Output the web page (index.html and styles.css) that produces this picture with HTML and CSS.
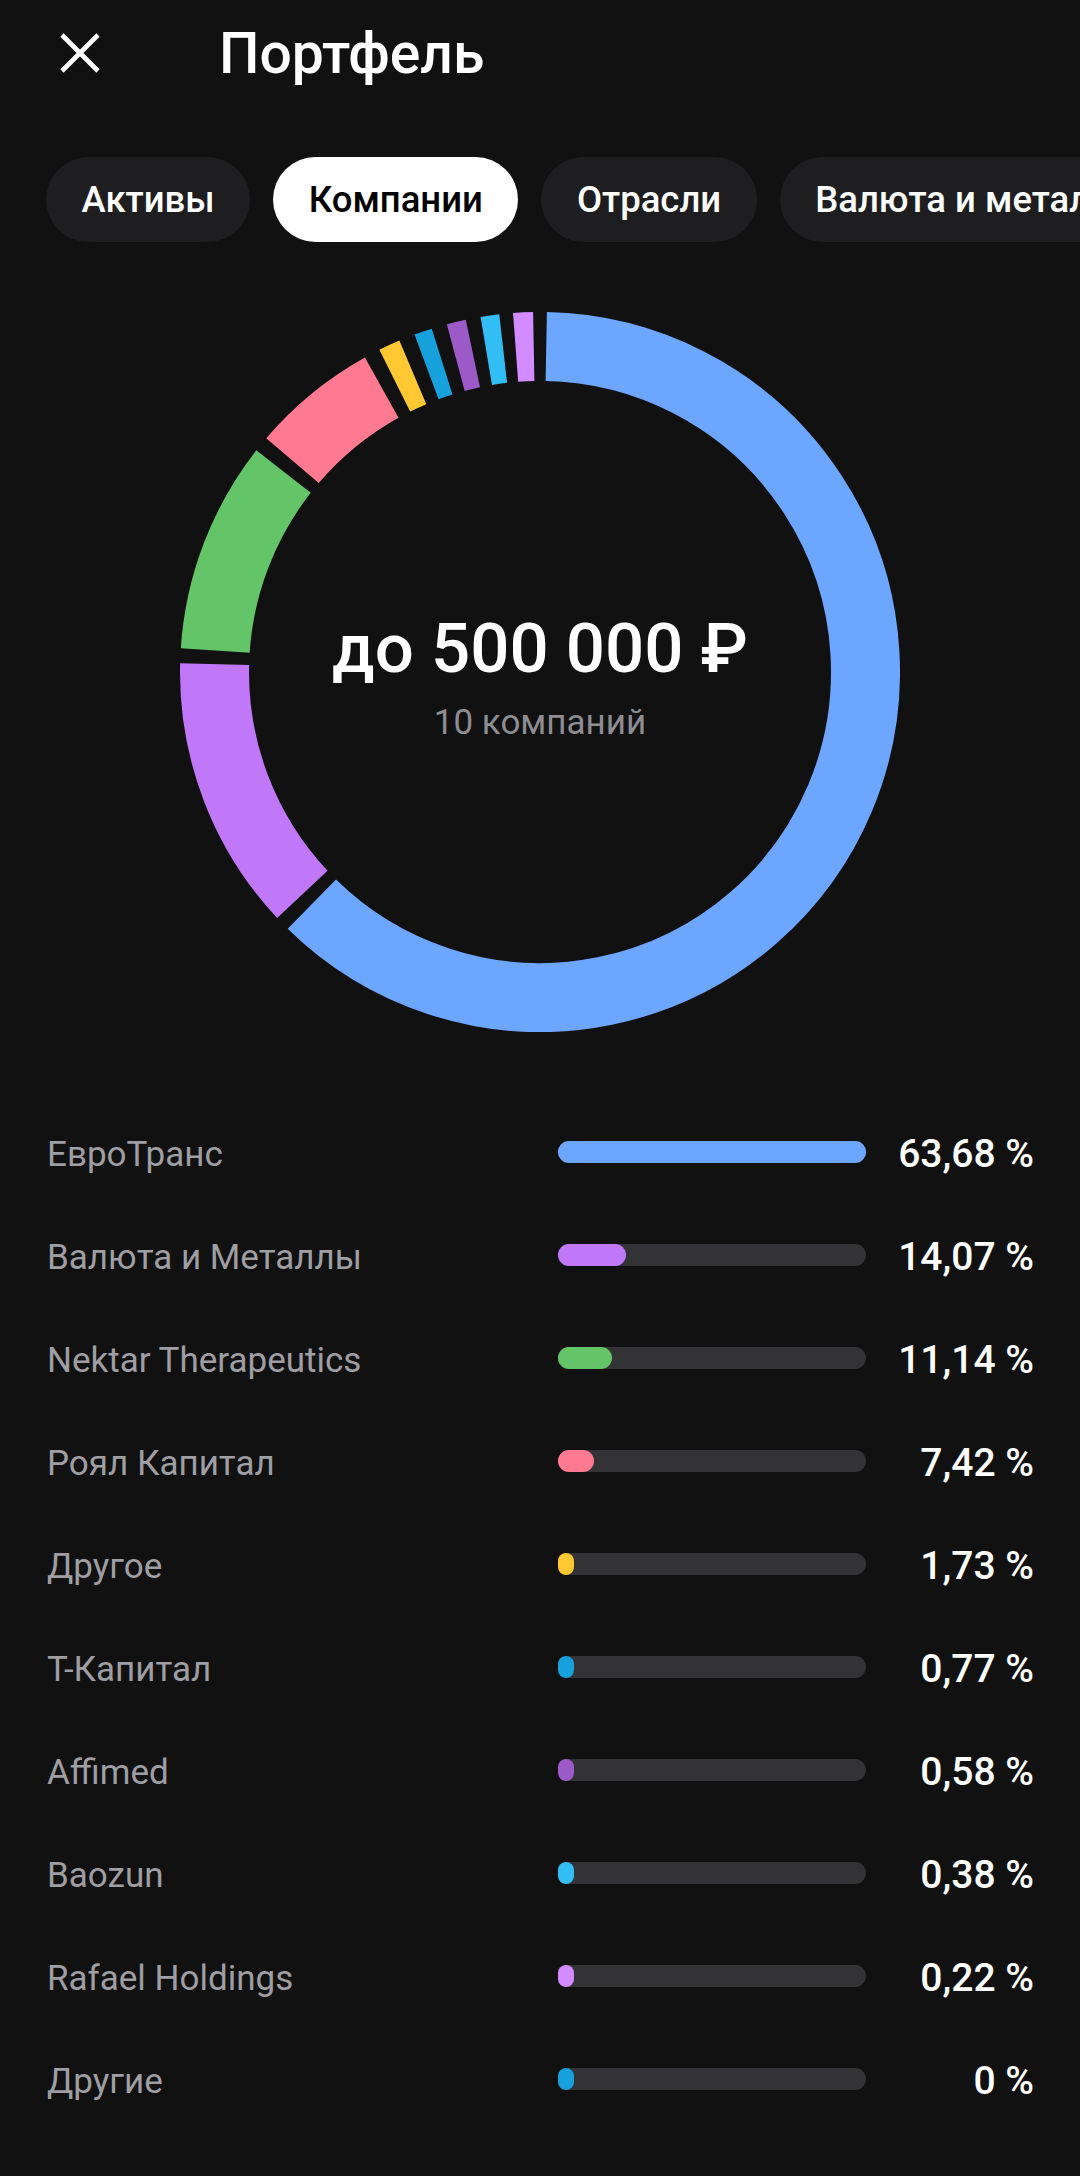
FILE: index.html
```html
<!DOCTYPE html>
<html lang="ru">
<head>
<meta charset="utf-8">
<title>Портфель</title>
<link rel="stylesheet" href="styles.css">
</head>
<body>
<div class="screen">
  <header class="header">
    <button class="close" aria-label="Закрыть">
      <svg width="40" height="40" viewBox="0 0 40 40"><path d="M2 2 L38 38 M38 2 L2 38" stroke="#fff" stroke-width="4.6" fill="none"/></svg>
    </button>
    <h1 class="title">Портфель</h1>
  </header>

  <nav class="tabs">
    <span class="tab">Активы</span>
    <span class="tab tab-active">Компании</span>
    <span class="tab">Отрасли</span>
    <span class="tab">Валюта и металлы</span>
  </nav>

  <section class="chart">
    <svg class="donut" width="720" height="720" viewBox="0 0 720 720" fill="none" stroke-width="69">
      <path d="M366.25 34.56 A325.5 325.5 0 1 1 131.85 592.16" stroke="#6ca6fe"/>
      <path d="M122.33 582.41 A325.5 325.5 0 0 1 34.60 352.05" stroke="#c078f8"/>
      <path d="M35.22 338.43 A325.5 325.5 0 0 1 103.50 159.60" stroke="#64c468"/>
      <path d="M112.49 148.60 A325.5 325.5 0 0 1 201.70 75.59" stroke="#ff7a91"/>
      <path d="M214.76 68.70 A325.5 325.5 0 0 1 232.82 60.38" stroke="#ffc833"/>
      <path d="M246.54 54.91 A325.5 325.5 0 0 1 262.12 49.57" stroke="#16a0dc"/>
      <path d="M275.75 45.59 A325.5 325.5 0 0 1 292.88 41.50" stroke="#9b5ac8"/>
      <path d="M306.28 38.96 A325.5 325.5 0 0 1 323.15 36.59" stroke="#32bef5"/>
      <path d="M335.59 35.42 A325.5 325.5 0 0 1 353.75 34.56" stroke="#d28cff"/>
    </svg>
    <div class="chart-center">
      <div class="total">до 500 000 ₽</div>
      <div class="count">10 компаний</div>
    </div>
  </section>

  <ul class="list">
    <li class="row"><span class="name">ЕвроТранс</span><span class="track"><span class="fill c-blue" style="width:308px"></span></span><span class="pct">63,68 %</span></li>
    <li class="row"><span class="name">Валюта и Металлы</span><span class="track"><span class="fill c-violet" style="width:68px"></span></span><span class="pct">14,07 %</span></li>
    <li class="row"><span class="name">Nektar Therapeutics</span><span class="track"><span class="fill c-green" style="width:54px"></span></span><span class="pct">11,14 %</span></li>
    <li class="row"><span class="name">Роял Капитал</span><span class="track"><span class="fill c-pink" style="width:36px"></span></span><span class="pct">7,42 %</span></li>
    <li class="row"><span class="name">Другое</span><span class="track"><span class="fill c-yellow" style="width:16px"></span></span><span class="pct">1,73 %</span></li>
    <li class="row"><span class="name">Т-Капитал</span><span class="track"><span class="fill c-ocean" style="width:16px"></span></span><span class="pct">0,77 %</span></li>
    <li class="row"><span class="name">Affimed</span><span class="track"><span class="fill c-plum" style="width:16px"></span></span><span class="pct">0,58 %</span></li>
    <li class="row"><span class="name">Baozun</span><span class="track"><span class="fill c-cyan" style="width:16px"></span></span><span class="pct">0,38 %</span></li>
    <li class="row"><span class="name">Rafael Holdings</span><span class="track"><span class="fill c-lavender" style="width:16px"></span></span><span class="pct">0,22 %</span></li>
    <li class="row"><span class="name">Другие</span><span class="track"><span class="fill c-ocean" style="width:16px"></span></span><span class="pct">0 %</span></li>
  </ul>
</div>
</body>
</html>
```

FILE: styles.css
```css
* { box-sizing: border-box; }

html, body {
  margin: 0;
  padding: 0;
  background: #111111;
}

body {
  font-family: Roboto, "Noto Sans", "Liberation Sans", sans-serif;
  color: #ffffff;
  width: 1080px;
  height: 2176px;
  overflow: hidden;
}

.screen {
  display: flex;
  flex-direction: column;
}

.header {
  height: 106px;
  display: flex;
  align-items: center;
  padding-left: 60px;
}

.close {
  width: 40px;
  height: 40px;
  padding: 0;
  border: 0;
  background: none;
  display: flex;
  align-items: center;
  justify-content: center;
  margin-top: -1px;
}

.title {
  margin: 0 0 0 119px;
  font-size: 57px;
  font-weight: 500;
  line-height: 1;
}

.tabs {
  margin-top: 51px;
  padding-left: 46px;
  display: flex;
  gap: 23px;
  white-space: nowrap;
  overflow: hidden;
}

.tab {
  flex: none;
  height: 85px;
  padding: 0 35.5px;
  border-radius: 43px;
  background: #1e1e20;
  color: #ffffff;
  font-size: 36.5px;
  font-weight: 500;
  display: flex;
  align-items: center;
}

.tab-active {
  background: #ffffff;
  color: #000000;
}

.chart {
  position: relative;
  margin-top: 70px;
  height: 720px;
  display: flex;
  justify-content: center;
}

.donut {
  display: block;
}

.chart-center {
  position: absolute;
  inset: 0;
  padding-top: 297px;
  display: flex;
  flex-direction: column;
  align-items: center;
}

.total {
  font-size: 69px;
  line-height: 79px;
  font-weight: 500;
}

.count {
  margin-top: 14px;
  font-size: 35px;
  line-height: 42px;
  color: #8d8d92;
}

.list {
  list-style: none;
  margin: 68px 0 0;
  padding: 0 46px 0 47px;
}

.row {
  height: 103px;
  display: grid;
  grid-template-columns: 1fr 308px 168px;
  align-items: center;
}

.name {
  font-size: 35px;
  color: #9e9ea3;
  padding-top: 5px;
}

.track {
  height: 22px;
  border-radius: 11px;
  background: #333335;
  display: flex;
}

.fill {
  height: 22px;
  border-radius: 11px;
}

.pct {
  text-align: right;
  font-size: 39px;
  font-weight: 500;
  padding-top: 4px;
}

.c-blue { background: #6ca6fe; }
.c-violet { background: #c078f8; }
.c-green { background: #64c468; }
.c-pink { background: #ff7a91; }
.c-yellow { background: #ffc833; }
.c-ocean { background: #16a0dc; }
.c-plum { background: #9b5ac8; }
.c-cyan { background: #32bef5; }
.c-lavender { background: #d28cff; }
```
